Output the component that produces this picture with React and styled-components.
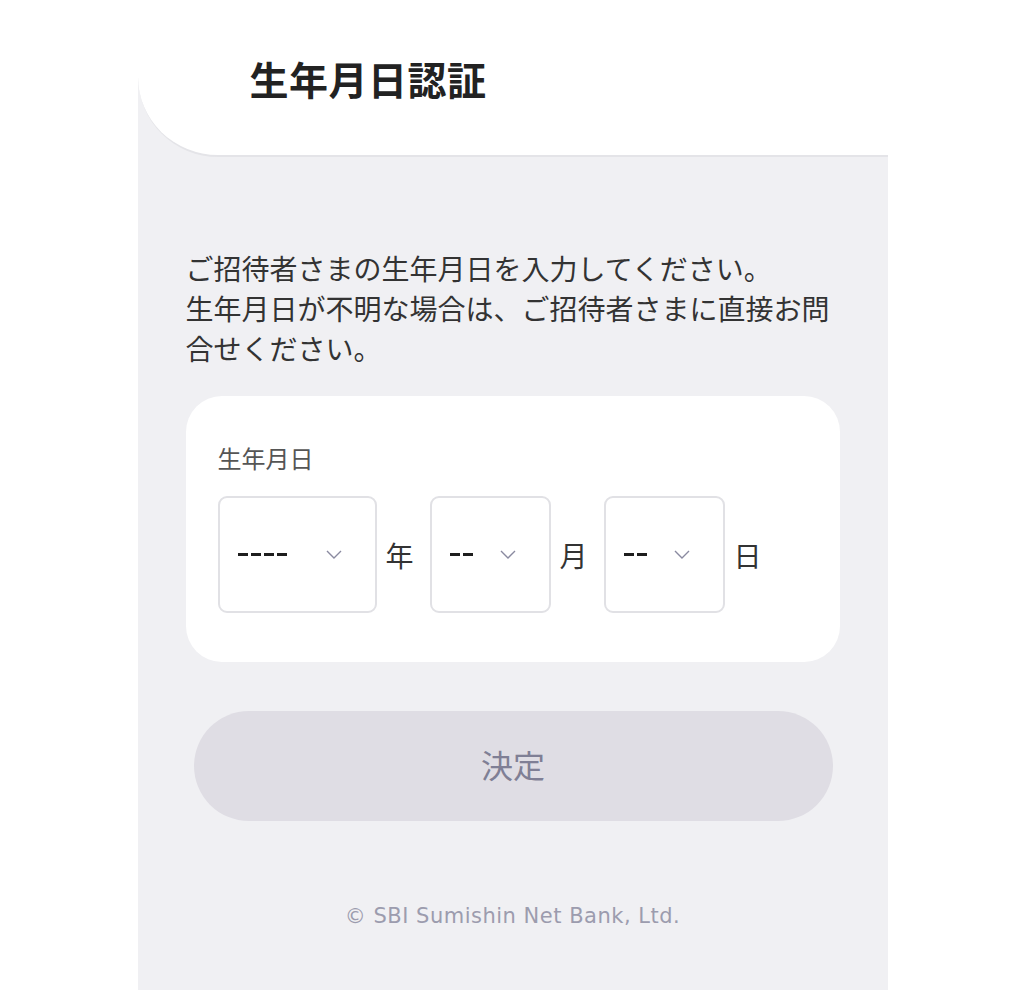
import React from "react";
import styled, { createGlobalStyle } from "styled-components";

const GlobalStyle = createGlobalStyle`
  html, body {
    margin: 0;
    padding: 0;
    background: #ffffff;
  }
  body {
    font-family: "Noto Sans CJK JP", "Noto Sans", sans-serif;
    color: #333333;
  }
`;

const Page = styled.div`
  width: 750px;
  min-height: 990px;
  margin: 0 0 0 calc(50% - 377px);
  background: #f0f0f3;
  display: flex;
  flex-direction: column;
`;

const Header = styled.header`
  height: 155px;
  background: #ffffff;
  border-bottom-left-radius: 80px;
  border-bottom: 2px solid #e4e4e8;
  display: flex;
  align-items: center;
  padding-left: 112px;
`;

const Title = styled.h1`
  margin: 0;
  font-size: 39px;
  font-weight: 700;
  color: #222222;
  letter-spacing: 0.5px;
`;

const Main = styled.main`
  padding: 91px 48px 0 48px;
  display: flex;
  flex-direction: column;
`;

const Lead = styled.p`
  margin: 0;
  font-size: 28px;
  line-height: 40px;
  color: #333333;
`;

const Card = styled.section`
  margin-top: 28px;
  background: #ffffff;
  border-radius: 36px;
  padding: 46px 32px 49px;
`;

const Label = styled.div`
  font-size: 24px;
  line-height: 32px;
  color: #555555;
`;

const DateRow = styled.div`
  margin-top: 22px;
  display: flex;
  align-items: center;
`;

const Select = styled.div`
  box-sizing: border-box;
  width: ${(p) => p.$w}px;
  height: 117px;
  border: 2px solid #e1e1e5;
  border-radius: 9px;
  background: #ffffff;
  display: flex;
  align-items: center;
  justify-content: space-between;
  padding: 0 33px 0 18px;
`;

const Dashes = styled.div`
  display: flex;
  gap: 3px;
`;

const Dash = styled.span`
  width: 10px;
  height: 3px;
  background: #1e1e1e;
`;

const Unit = styled.span`
  font-size: 28px;
  color: #333333;
  margin: 0 16px 0 9px;
`;

const SubmitButton = styled.button`
  margin: 49px 7px 0 8px;
  height: 110px;
  padding: 0 0 5px;
  border: none;
  border-radius: 55px;
  background: #dfdde4;
  color: #7f7f95;
  font-family: "Noto Sans CJK JP", sans-serif;
  font-size: 32px;
  cursor: not-allowed;
`;

const Footer = styled.footer`
  margin-top: 83px;
  text-align: center;
  font-family: "DejaVu Sans", sans-serif;
  font-size: 21px;
  letter-spacing: 0.5px;
  color: #9c9cae;
`;

const Chevron = () => (
  <svg width="16" height="9" viewBox="0 0 16 9" fill="none">
    <path d="M1 1l7 7 7-7" stroke="#8a8aa0" strokeWidth="1.4" />
  </svg>
);

const DateSelect = ({ width, dashes }) => (
  <Select $w={width}>
    <Dashes>
      {Array.from({ length: dashes }).map((_, i) => (
        <Dash key={i} />
      ))}
    </Dashes>
    <Chevron />
  </Select>
);

export default function App() {
  return (
    <>
      <GlobalStyle />
      <Page>
        <Header>
          <Title>生年月日認証</Title>
        </Header>
        <Main>
          <Lead>
            ご招待者さまの生年月日を入力してください。
            <br />
            生年月日が不明な場合は、ご招待者さまに直接お問合せください。
          </Lead>
          <Card>
            <Label>生年月日</Label>
            <DateRow>
              <DateSelect width={159} dashes={4} />
              <Unit>年</Unit>
              <DateSelect width={121} dashes={2} />
              <Unit>月</Unit>
              <DateSelect width={121} dashes={2} />
              <Unit>日</Unit>
            </DateRow>
          </Card>
          <SubmitButton disabled>決定</SubmitButton>
          <Footer>© SBI Sumishin Net Bank, Ltd.</Footer>
        </Main>
      </Page>
    </>
  );
}
